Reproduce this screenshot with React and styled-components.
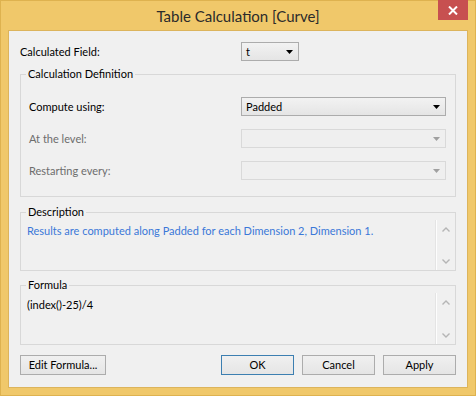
import styled, { createGlobalStyle } from 'styled-components';

const GlobalStyle = createGlobalStyle`
  html, body {
    margin: 0;
    padding: 0;
    background: #ffffff;
  }
  * {
    box-sizing: border-box;
  }
`;

const Window = styled.div`
  width: 476px;
  height: 396px;
  display: flex;
  flex-direction: column;
  background: #f0c86a;
  border: 1px solid #deb24f;
  font-family: Lato, "Open Sans", sans-serif;
  font-size: 11px;
  color: #000;
`;

const TitleBar = styled.div`
  height: 29px;
  flex: none;
  display: grid;
  grid-template-columns: 1fr auto 1fr;
  align-items: start;
`;

const Title = styled.div`
  grid-column: 2;
  font-size: 15px;
  line-height: 20px;
  padding-top: 5px;
  color: #2b2b2b;
  white-space: nowrap;
`;

const CloseButton = styled.div`
  grid-column: 3;
  justify-self: end;
  margin-right: 7px;
  width: 30px;
  height: 20px;
  margin-top: -1px;
  background: #c75050;
  display: flex;
  align-items: center;
  justify-content: center;
`;

const Client = styled.div`
  flex: 1;
  margin: 0 7px 7px;
  background: #f0f0f0;
  border: 1px solid #dcb45c;
  padding: 11px 11px 12px;
  display: flex;
  flex-direction: column;
`;

const FieldRow = styled.div`
  display: grid;
  grid-template-columns: ${(p) => p.$labelWidth}px auto;
  align-items: center;
  height: 19px;
  & + & {
    margin-top: 13px;
  }
`;

const Label = styled.span`
  color: ${(p) => (p.$disabled ? '#6d6d6d' : '#000')};
  line-height: 16px;
  white-space: nowrap;
`;

const Select = styled.div`
  width: ${(p) => p.$width}px;
  height: 19px;
  display: flex;
  align-items: center;
  justify-content: space-between;
  padding: 0 5px 0 4px;
  border: 1px solid ${(p) => (p.$disabled ? '#d9d9d9' : '#acacac')};
  background: ${(p) =>
    p.$disabled ? '#efefef' : 'linear-gradient(#f2f2f2, #e5e5e5)'};
  line-height: 16px;
`;

const Group = styled.fieldset`
  margin: ${(p) => p.$gap}px 0 0;
  padding: 0;
  border: 1px solid #d8d8d8;
  min-width: 0;
`;

const Legend = styled.legend`
  margin-left: 5px;
  padding: 0 2px;
  line-height: 14px;
  color: #000;
`;

const GroupBody = styled.div`
  padding: 16px 9px 16px 8px;
`;

const TextBox = styled.div`
  height: ${(p) => p.$height}px;
  display: flex;
`;

const TextBody = styled.div`
  flex: 1;
  padding: ${(p) => p.$top}px 6px 0;
  line-height: 16px;
  color: ${(p) => p.$color};
  white-space: nowrap;
`;

const ScrollBar = styled.div`
  width: 19px;
  flex: none;
  margin-top: 1px;
  border-left: 1px solid #fdfdfd;
  box-shadow: -1px 0 0 #e4e4e4;
  display: flex;
  flex-direction: column;
  justify-content: space-between;
  align-items: center;
  padding: 7px 0 6px;
`;

const ButtonBar = styled.div`
  margin-top: 10px;
  display: flex;
  gap: 8px;
`;

const Button = styled.div`
  width: ${(p) => p.$width}px;
  height: 20px;
  display: flex;
  align-items: center;
  justify-content: center;
  border: 1px solid ${(p) => (p.$primary ? '#3c7fb1' : '#acacac')};
  background: linear-gradient(#f0f0f0, #e5e5e5);
  line-height: 16px;
  white-space: nowrap;
  &:first-child {
    margin-right: auto;
  }
`;

const Arrow = ({ color = '#000' }) => (
  <svg width="7" height="4" viewBox="0 0 7 4">
    <path d="M0 0h7L3.5 4z" fill={color} />
  </svg>
);

const Chevron = ({ up }) => (
  <svg width="8" height="5" viewBox="0 0 8 5">
    <path
      d={up ? 'M0.5 4.5L4 1l3.5 3.5' : 'M0.5 0.5L4 4l3.5-3.5'}
      fill="none"
      stroke="#b5b5b5"
      strokeWidth="1.4"
    />
  </svg>
);

const App = () => (
  <>
    <GlobalStyle />
    <Window>
      <TitleBar>
        <Title>Table Calculation [Curve]</Title>
        <CloseButton>
          <svg width="10" height="9" viewBox="0 0 10 9">
            <path d="M1 0.5l8 8M9 0.5l-8 8" stroke="#fff" strokeWidth="2" />
          </svg>
        </CloseButton>
      </TitleBar>
      <Client>
        <FieldRow $labelWidth={221}>
          <Label>Calculated Field:</Label>
          <Select $width={58}>
            t
            <Arrow />
          </Select>
        </FieldRow>

        <Group $gap={6}>
          <Legend>Calculation Definition</Legend>
          <GroupBody>
            <FieldRow $labelWidth={212}>
              <Label>Compute using:</Label>
              <Select $width={205}>
                Padded
                <Arrow />
              </Select>
            </FieldRow>
            <FieldRow $labelWidth={212}>
              <Label $disabled>At the level:</Label>
              <Select $width={205} $disabled>
                <span />
                <Arrow color="#a0a0a0" />
              </Select>
            </FieldRow>
            <FieldRow $labelWidth={212}>
              <Label $disabled>Restarting every:</Label>
              <Select $width={205} $disabled>
                <span />
                <Arrow color="#a0a0a0" />
              </Select>
            </FieldRow>
          </GroupBody>
        </Group>

        <Group $gap={8}>
          <Legend>Description</Legend>
          <TextBox $height={51}>
            <TextBody $top={4} $color="#3b78d8">
              Results are computed along Padded for each Dimension 2, Dimension 1.
            </TextBody>
            <ScrollBar>
              <Chevron up />
              <Chevron />
            </ScrollBar>
          </TextBox>
        </Group>

        <Group $gap={7}>
          <Legend>Formula</Legend>
          <TextBox $height={52}>
            <TextBody $top={5} $color="#000">
              (index()-25)/4
            </TextBody>
            <ScrollBar>
              <Chevron up />
              <Chevron />
            </ScrollBar>
          </TextBox>
        </Group>

        <ButtonBar>
          <Button $width={86}>Edit Formula...</Button>
          <Button $width={73} $primary>OK</Button>
          <Button $width={73}>Cancel</Button>
          <Button $width={73}>Apply</Button>
        </ButtonBar>
      </Client>
    </Window>
  </>
);

export default App;
